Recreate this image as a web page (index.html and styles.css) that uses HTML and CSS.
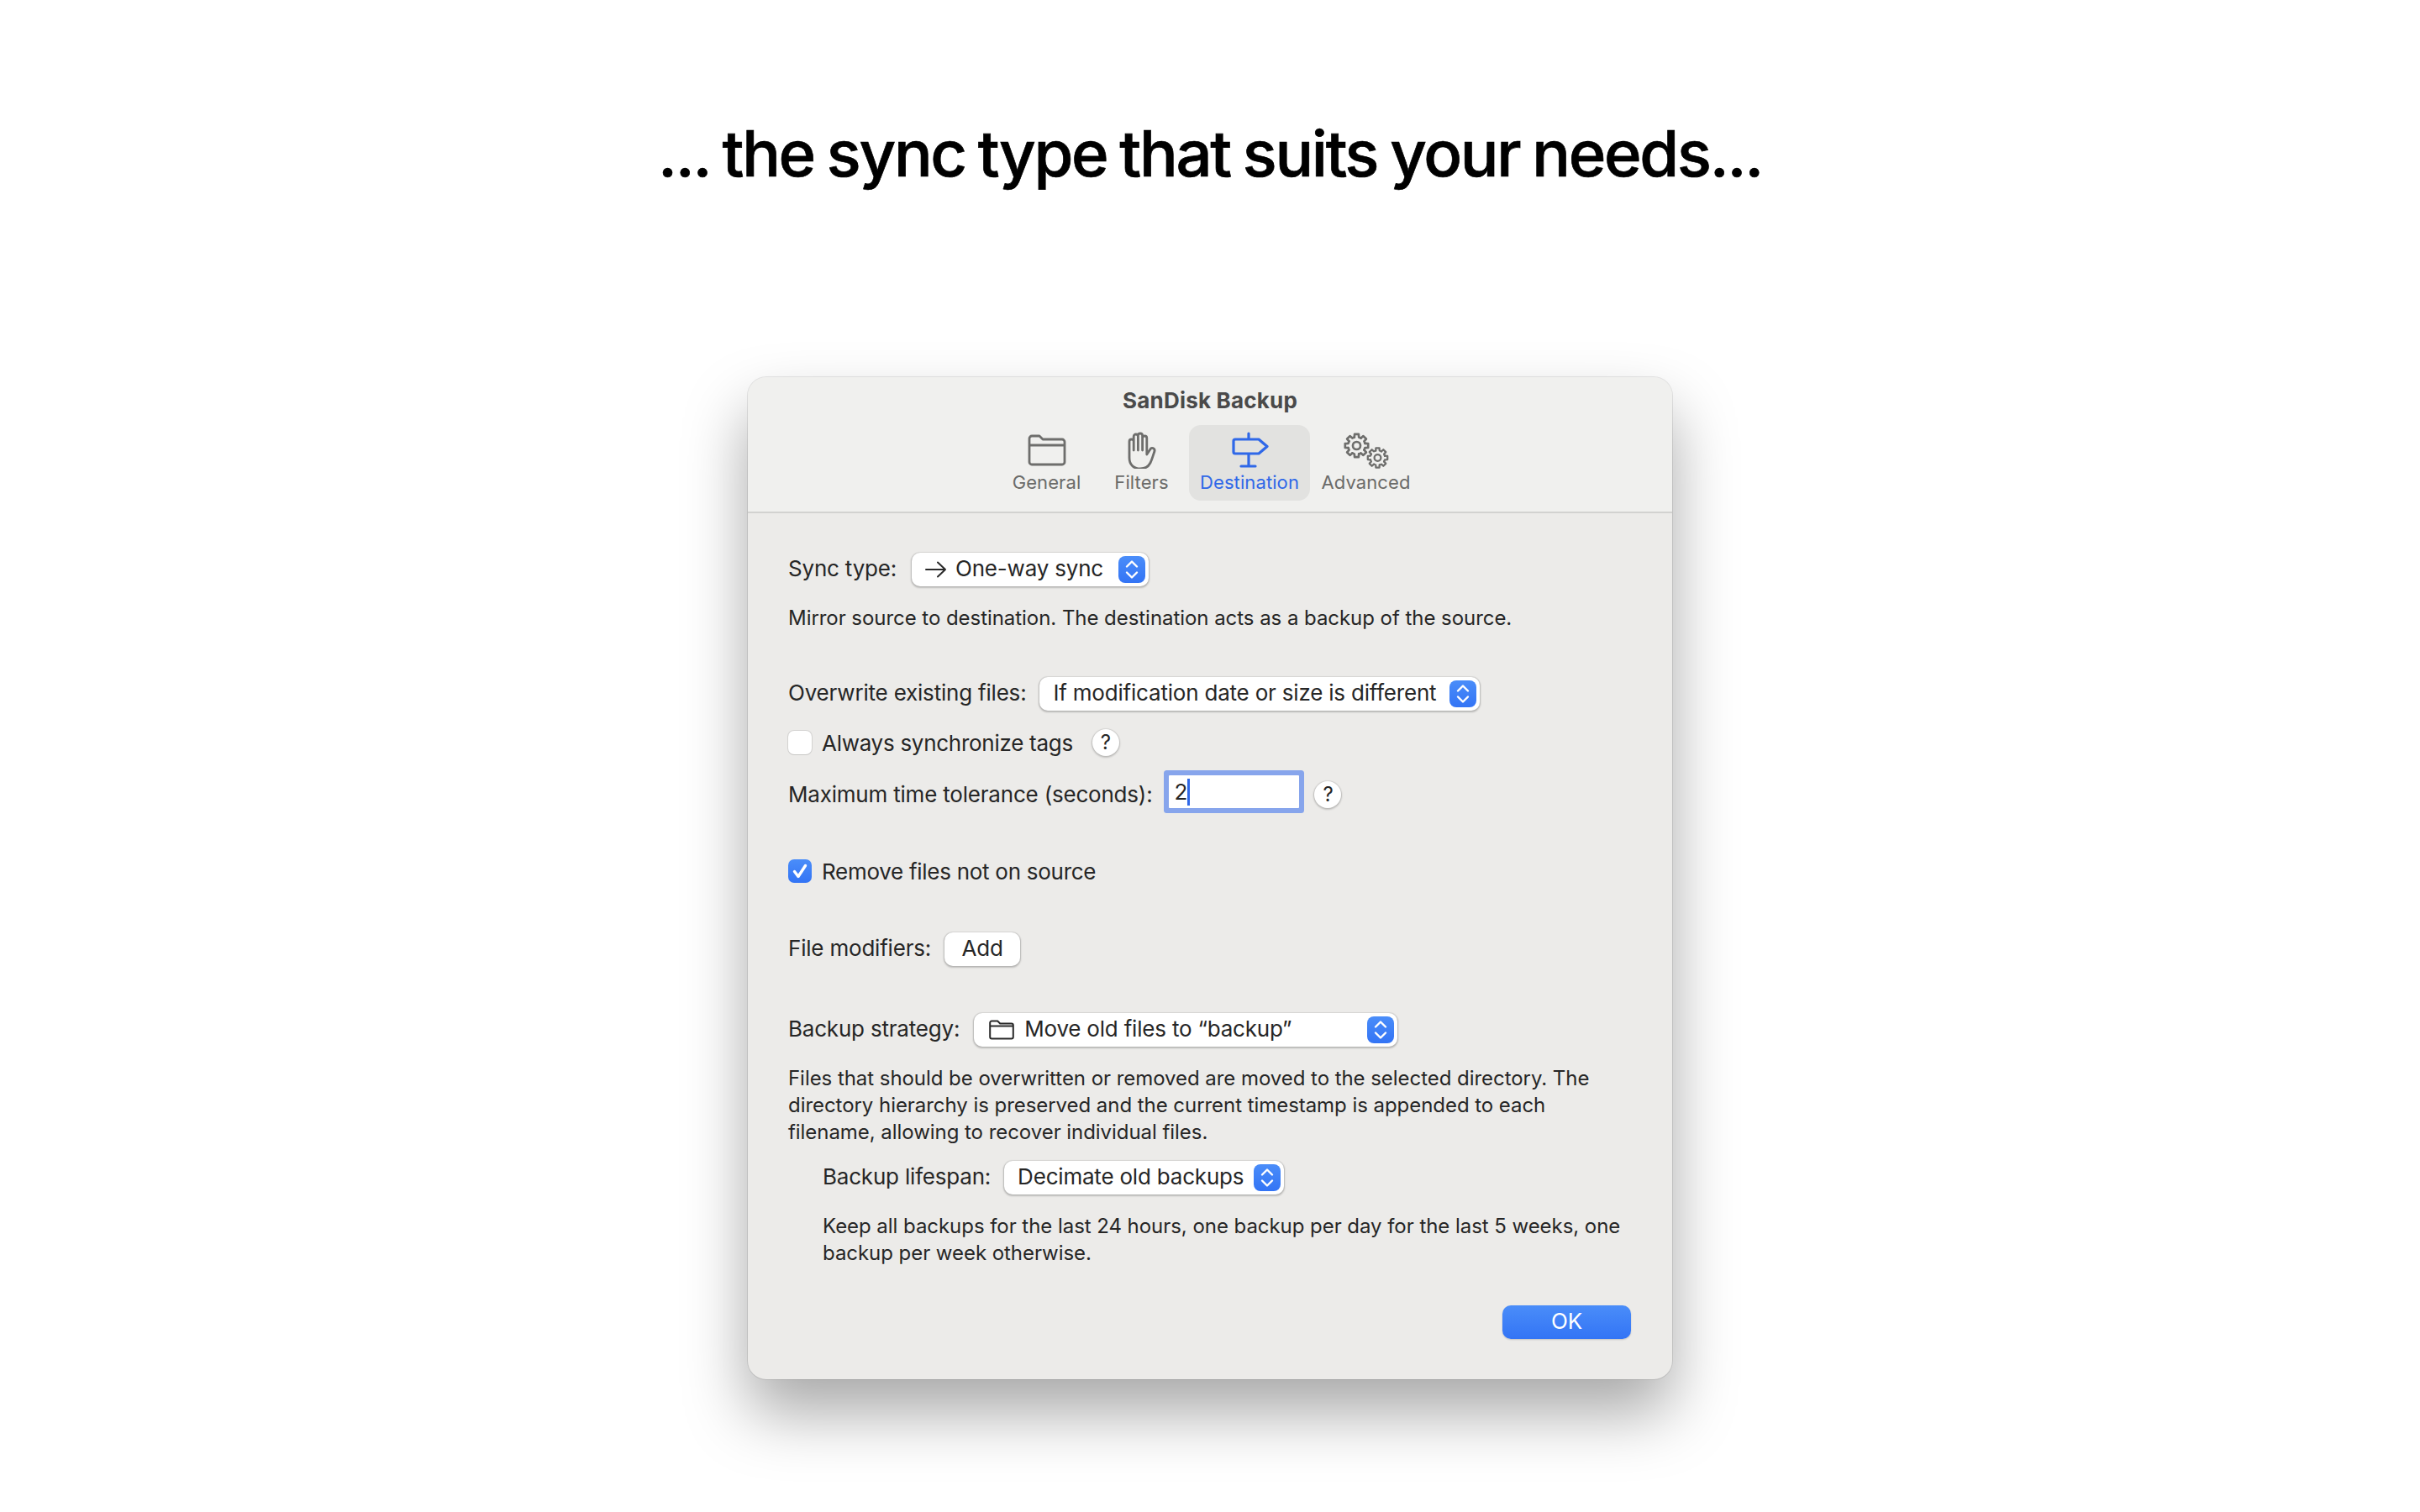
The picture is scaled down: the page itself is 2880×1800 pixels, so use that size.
FILE: index.html
```html
<!DOCTYPE html>
<html lang="en">
<head>
<meta charset="utf-8">
<title>SanDisk Backup</title>
<link rel="stylesheet" href="styles.css">
</head>
<body>
<svg class="defs" width="0" height="0" aria-hidden="true">
  <defs>
    <g id="gear">
      <g id="tooth4">
        <g id="tooth2">
          <path id="tooth" d="M-2.59-9.66L-2.34-13.3L2.34-13.3L2.59-9.66A10 10 0 0 1 5-8.66"/>
          <use href="#tooth" transform="rotate(45)"/>
        </g>
        <use href="#tooth2" transform="rotate(90)"/>
      </g>
      <use href="#tooth4" transform="rotate(180)"/>
      <circle r="4.4"/>
    </g>
    <g id="updown">
      <path d="M-6-3.5L0-9.5L6-3.5M-6 3.5L0 9.5L6 3.5"/>
    </g>
  </defs>
</svg>
<h1 class="headline">... the sync type that suits your needs...</h1>
<main class="window">
  <header class="titlebar">
    <div class="title">SanDisk Backup</div>
    <nav class="tabs">
      <div class="tab tab-general">
        <svg class="tab-icon" width="46" height="46" viewBox="0 0 46 46"><path d="M2 12V10a3 3 0 0 1 3-3H14l4 4H41a3 3 0 0 1 3 3V38a3 3 0 0 1-3 3H5a3 3 0 0 1-3-3V12M2 18H44"/></svg>
        <span>General</span>
      </div>
      <div class="tab tab-filters">
        <svg class="tab-icon" width="46" height="46" viewBox="0 0 46 46"><path d="M8 13.600a2.600 2.600 0 0 1 5.200 0V24M13.200 24V7.600a2.600 2.600 0 0 1 5.200 0V24M18.400 24V6.600a2.600 2.600 0 0 1 5.200 0V24M23.600 24V9.600a2.600 2.600 0 0 1 5.200 0V29l4-6a2.800 2.800 0 0 1 5.200 2C36 31 35 35 33 39C31 43 27 46 21 46C13 46 8 41 8 33V13.600"/></svg>
        <span>Filters</span>
      </div>
      <div class="tab tab-destination is-active">
        <svg class="tab-icon" width="46" height="46" viewBox="0 0 46 46"><path d="M22 4V11M22 28V43M13 43H30M6 11H34L44 19.500L34 28H6a2 2 0 0 1-2-2V13a2 2 0 0 1 2-2z"/></svg>
        <span>Destination</span>
      </div>
      <div class="tab tab-advanced">
        <svg class="tab-icon" width="56" height="46" viewBox="0 0 56 46"><use href="#gear" transform="translate(16.500 18.500) scale(1.03)"/><use href="#gear" transform="translate(41.500 33) scale(.88)"/></svg>
        <span>Advanced</span>
      </div>
    </nav>
  </header>
  <section class="content">
    <div class="row row-sync">
      <span class="field-text">Sync type:</span>
      <div class="popup popup-sync">
        <svg class="popup-arrow" width="26" height="22" viewBox="0 0 26 22"><path d="M1 11H24M15 2.500L24 11L15 19.500"/></svg>
        <span class="field-text">One-way sync</span>
        <span class="stepper"><svg width="32" height="32" viewBox="-16 -16 32 32"><use href="#updown"/></svg></span>
      </div>
    </div>
    <p class="desc desc-sync">Mirror source to destination. The destination acts as a backup of the source.</p>
    <div class="row row-overwrite">
      <span class="field-text">Overwrite existing files:</span>
      <div class="popup popup-overwrite">
        <span class="field-text">If modification date or size is different</span>
        <span class="stepper"><svg width="32" height="32" viewBox="-16 -16 32 32"><use href="#updown"/></svg></span>
      </div>
    </div>
    <div class="row row-check row-tags">
      <span class="checkbox"></span>
      <span class="check-label">Always synchronize tags</span>
      <span class="help help-tags">?</span>
    </div>
    <div class="row row-tolerance">
      <span>Maximum time tolerance (seconds):</span>
      <div class="input"><span>2</span><i class="caret"></i></div>
      <span class="help help-tolerance">?</span>
    </div>
    <div class="row row-check row-remove">
      <span class="checkbox is-checked"><svg width="28" height="28" viewBox="0 0 28 28"><path d="M7.500 14.500L12 20.500L20.500 7.500"/></svg></span>
      <span class="check-label">Remove files not on source</span>
    </div>
    <div class="row row-modifiers">
      <span class="field-text">File modifiers:</span>
      <div class="button">Add</div>
    </div>
    <div class="row row-strategy">
      <span class="field-text">Backup strategy:</span>
      <div class="popup popup-strategy">
        <svg class="popup-folder" width="30" height="24" viewBox="0 0 30 24"><path d="M1.200 5V3.500a2 2 0 0 1 2-2h7l3 3H26.800a2 2 0 0 1 2 2V20.500a2 2 0 0 1-2 2H3.200a2 2 0 0 1-2-2V5M1.200 7.500H28.800"/></svg>
        <span class="field-text">Move old files to “backup”</span>
        <span class="stepper"><svg width="32" height="32" viewBox="-16 -16 32 32"><use href="#updown"/></svg></span>
      </div>
    </div>
    <p class="desc desc-strategy">Files that should be overwritten or removed are moved to the selected directory. The<br>directory hierarchy is preserved and the current timestamp is appended to each<br>filename, allowing to recover individual files.</p>
    <div class="row row-lifespan">
      <span class="field-text">Backup lifespan:</span>
      <div class="popup popup-lifespan">
        <span class="field-text">Decimate old backups</span>
        <span class="stepper"><svg width="32" height="32" viewBox="-16 -16 32 32"><use href="#updown"/></svg></span>
      </div>
    </div>
    <p class="desc desc-lifespan">Keep all backups for the last 24 hours, one backup per day for the last 5 weeks, one<br>backup per week otherwise.</p>
    <div class="actions"><div class="button-primary">OK</div></div>
  </section>
</main>
</body>
</html>
```

FILE: styles.css
```css
* { box-sizing: border-box; }
html, body { margin: 0; padding: 0; background: #fff; }
body {
  width: 2880px;
  height: 1800px;
  overflow: hidden;
  font-family: Inter, "Noto Sans", sans-serif;
  color: #262626;
}
.defs { display: block; height: 0; }
#gear { fill: none; stroke: #6e6e6c; stroke-width: 2.6; stroke-linejoin: round; }
#updown { fill: none; stroke: #fff; stroke-width: 2.4; stroke-linecap: round; stroke-linejoin: round; }

.headline {
  margin: 0;
  height: 449px;
  padding-top: 132px;
  font-size: 76px;
  line-height: 100px;
  font-weight: 550;
  -webkit-text-stroke: .7px #000;
  letter-spacing: -2.3px;
  word-spacing: -3px;
  text-align: center;
  color: #000;
}

.window {
  width: 1100px;
  height: 1193px;
  margin-left: 890px;
  border-radius: 22px;
  background: #ecebe9;
  box-shadow: 0 0 0 1px rgba(0, 0, 0, .09), 0 40px 75px rgba(0, 0, 0, .34);
  font-size: 26px;
  letter-spacing: -.2px;
}

.titlebar {
  height: 162px;
  padding-top: 12px;
  background: #f0f0ee;
  border-bottom: 2px solid #d2d2d0;
  border-radius: 22px 22px 0 0;
}
.title {
  height: 32px;
  line-height: 32px;
  text-align: center;
  font-size: 26px;
  font-weight: 700;
  letter-spacing: .2px;
  color: #4a4a4a;
}
.tabs {
  display: flex;
  justify-content: center;
  gap: 0;
  margin-top: 13px;
  padding-left: 3px;
}
.tab {
  display: flex;
  flex-direction: column;
  align-items: center;
  height: 90px;
  padding-top: 6px;
  border-radius: 14px;
  font-size: 22px;
  letter-spacing: .1px;
  color: #6b6b69;
}
.tab span { margin-top: 1px; line-height: 30px; white-space: nowrap; }
.tab-icon {
  height: 46px;
  fill: none;
  stroke: #6e6e6c;
  stroke-width: 2.8;
  stroke-linejoin: round;
  stroke-linecap: round;
}
.tab-general { width: 105px; }
.tab-filters { width: 89px; margin-left: 16px; }
.tab-destination { width: 144px; margin-left: 12px; }
.tab-advanced { width: 129px; margin-left: 2px; }
.is-active { background: #e2e2e0; color: #2f68e8; }
.is-active .tab-icon { stroke: #2f68e8; stroke-width: 3.2; }

.content { padding: 47px 49px 0 48px; }

.row {
  display: flex;
  align-items: center;
  white-space: nowrap;
}
.field-text { padding-bottom: 3px; }
.desc {
  margin: 0;
  font-size: 24px;
  line-height: 32px;
  letter-spacing: -.05px;
  white-space: nowrap;
}

.popup {
  display: flex;
  align-items: center;
  height: 40px;
  padding: 0 4px 0 16px;
  background: #fff;
  border-radius: 10px;
  box-shadow: 0 0 0 1px rgba(0, 0, 0, .04), 0 1px 2px 1px rgba(0, 0, 0, .2);
}
.stepper {
  display: block;
  width: 32px;
  height: 32px;
  margin-left: auto;
  border-radius: 8px;
  background: linear-gradient(#4a8df9, #3374f5);
}
.stepper svg { display: block; }
.popup-arrow {
  margin-right: 10px;
  fill: none;
  stroke: #2a2a2a;
  stroke-width: 2;
  stroke-linecap: round;
  stroke-linejoin: round;
}
.popup-folder {
  margin: 0 12px 0 2px;
  fill: none;
  stroke: #2a2a2a;
  stroke-width: 2;
  stroke-linejoin: round;
}

.row-sync { height: 40px; }
.popup-sync { width: 282px; margin-left: 18px; }
.desc-sync { margin-top: 22px; }
.row-overwrite { height: 40px; margin-top: 54px; }
.popup-overwrite { width: 524px; margin-left: 16px; }
.row-check { height: 32px; }
.check-label { padding-top: 1px; letter-spacing: -.28px; }
.row-tags { margin-top: 22px; }
.row-tolerance { height: 47px; margin-top: 22px; }
.row-remove { margin-top: 52px; }
.row-modifiers { height: 40px; margin-top: 57px; }
.row-strategy { height: 40px; margin-top: 56px; }
.popup-strategy { width: 504px; margin-left: 17px; }
.desc-strategy { margin-top: 22px; }
.row-lifespan { height: 40px; margin-top: 18px; margin-left: 41px; }
.popup-lifespan { width: 333px; margin-left: 16px; }
.desc-lifespan { margin-top: 22px; margin-left: 41px; }

.checkbox {
  display: block;
  width: 28px;
  height: 28px;
  margin-right: 12px;
  background: #fff;
  border-radius: 7px;
  box-shadow: 0 0 0 1px rgba(0, 0, 0, .1), 0 1px 1px rgba(0, 0, 0, .06);
}
.checkbox svg {
  display: block;
  fill: none;
  stroke: #fff;
  stroke-width: 3.4;
  stroke-linecap: round;
  stroke-linejoin: round;
}
.is-checked { background: linear-gradient(#4a8df9, #3374f5); box-shadow: none; }

.help {
  display: block;
  width: 32px;
  height: 32px;
  line-height: 32px;
  text-align: center;
  border-radius: 50%;
  background: #fff;
  font-size: 24px;
  box-shadow: 0 0 0 1px rgba(0, 0, 0, .04), 0 1px 2px 1px rgba(0, 0, 0, .18);
}
.help-tags { margin-left: 23px; }
.help-tolerance { margin-left: 18px; }

.input {
  display: flex;
  align-items: center;
  width: 155px;
  height: 39px;
  margin: 0 0 6px 20px;
  padding-left: 6px;
  background: #fff;
  box-shadow: 0 0 0 6px #87a5ec;
  border-radius: 1px;
}
.caret { display: block; width: 3px; height: 32px; background: #2f68e8; }

.button {
  width: 90px;
  height: 40px;
  margin-left: 16px;
  line-height: 37px;
  text-align: center;
  background: #fff;
  border-radius: 10px;
  box-shadow: 0 0 0 1px rgba(0, 0, 0, .04), 0 1px 2px 1px rgba(0, 0, 0, .2);
}

.actions { display: flex; justify-content: flex-end; margin-top: 46px; }
.button-primary {
  width: 153px;
  height: 40px;
  line-height: 38px;
  text-align: center;
  color: #fff;
  border-radius: 10px;
  background: linear-gradient(#4a8df9, #3374f5);
  box-shadow: 0 1px 2px rgba(0, 0, 0, .18);
}
```
